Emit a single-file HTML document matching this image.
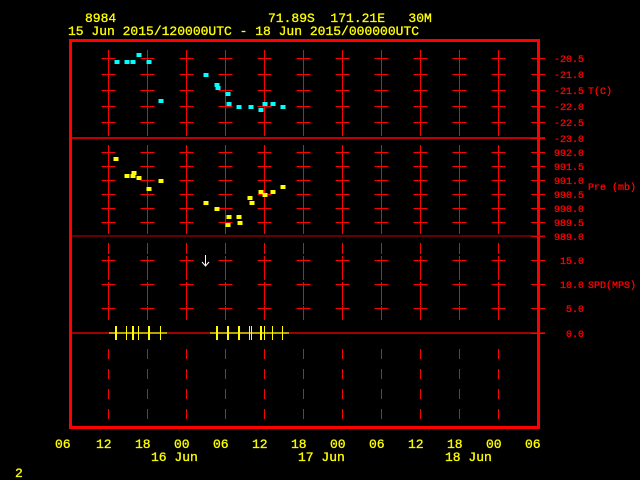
<!DOCTYPE html>
<html><head><meta charset="utf-8"><style>
html,body{margin:0;padding:0;background:#000;width:640px;height:480px;overflow:hidden}
svg{display:block}
text{font-family:"Liberation Mono",monospace;white-space:pre}
</style></head><body>
<svg id="s" width="640" height="480" xmlns="http://www.w3.org/2000/svg" xml:space="preserve">
<rect width="640" height="480" fill="#000"/>
<g fill="#ffff00" stroke="#ffff00" stroke-width="0.3" font-size="13">
<text x="85" y="22">8984</text>
<text x="268" y="22">71.89S  171.21E   30M</text>
<text x="68" y="35">15 Jun 2015/120000UTC - 18 Jun 2015/000000UTC</text>
<text x="55" y="448">06</text><text x="96" y="448">12</text><text x="135" y="448">18</text><text x="174" y="448">00</text><text x="213" y="448">06</text><text x="252" y="448">12</text><text x="291" y="448">18</text><text x="330" y="448">00</text><text x="369" y="448">06</text><text x="408" y="448">12</text><text x="447" y="448">18</text><text x="486" y="448">00</text><text x="525" y="448">06</text>
<text x="151" y="461">16 Jun</text><text x="298" y="461">17 Jun</text><text x="445" y="461">18 Jun</text>
<text x="15" y="477">2</text>
</g>
<g fill="#ff0000" stroke="#ff0000" stroke-width="0.3" font-size="10" text-anchor="end">
<text x="584" y="62">-20.5</text><text x="584" y="78">-21.0</text><text x="584" y="94">-21.5</text><text x="584" y="110">-22.0</text><text x="584" y="126">-22.5</text><text x="584" y="142">-23.0</text>
<text x="584" y="156">992.0</text><text x="584" y="170">991.5</text><text x="584" y="184">991.0</text><text x="584" y="198">990.5</text><text x="584" y="212">990.0</text><text x="584" y="226">989.5</text><text x="584" y="240">989.0</text>
<text x="584" y="264">15.0</text><text x="584" y="288">10.0</text><text x="584" y="312">5.0</text><text x="584" y="337">0.0</text>
</g>
<g fill="#ff0000" stroke="#ff0000" stroke-width="0.3" font-size="10">
<text x="588" y="94">T(C)</text><text x="588" y="190">Pre (mb)</text><text x="588" y="288">SPD(MPS)</text>
</g>
<g id="grid" stroke="#ff0000" stroke-width="1"></g>
<rect x="70.5" y="40.5" width="468" height="387" fill="none" stroke="#ff0000" stroke-width="3"/>
<line x1="72" y1="138" x2="545" y2="138" stroke="#ff0000" stroke-width="1.5"/>
<line x1="72" y1="236" x2="545" y2="236" stroke="#cc0000" stroke-width="1"/>
<line x1="72" y1="333" x2="545" y2="333" stroke="#ff0000" stroke-width="1.3"/>
<g id="pts"></g>
<g stroke="#ffff00" stroke-width="1.2">
<line x1="109" y1="333" x2="167" y2="333"/><line x1="210" y1="333" x2="289" y2="333"/>
</g>
<g id="bars" stroke="#ffff00"></g>
<g stroke="#ffffff" stroke-width="1" fill="none"><line x1="205.5" y1="255" x2="205.5" y2="266"/><polyline points="202,262 205.5,266 209,262"/></g>
</svg>
<script>
var ns="http://www.w3.org/2000/svg";
function L(g,x1,y1,x2,y2,c,w){var l=document.createElementNS(ns,"line");l.setAttribute("x1",x1);l.setAttribute("y1",y1);l.setAttribute("x2",x2);l.setAttribute("y2",y2);if(c)l.setAttribute("stroke",c);if(w)l.setAttribute("stroke-width",w);g.appendChild(l);}
var g=document.getElementById("grid");
var cols=[108.5,147.5,186.5,225.5,264.5,303.5,342.5,381.5,420.5,459.5,498.5];
var ticks=[58,74,90,106,122,152,166,180,194,208,222,260,284,308];
cols.forEach(function(x){
 [[50,130],[145,229],[243,254],[256,280],[282,305],[306,320]].forEach(function(s){L(g,x,s[0],x,s[1]);});
 ticks.forEach(function(y){L(g,x-7,y+.5,x+7,y+.5);});
 L(g,x,130,x,136);L(g,x,228,x,234);
 [349,369,389,409].forEach(function(y){L(g,x,y,x,y+10);});
});
ticks.concat([138,236,333]).forEach(function(y){L(g,531,y+.5,545,y+.5);});
var p=document.getElementById("pts");
function R(x,y,c){var r=document.createElementNS(ns,"rect");r.setAttribute("x",x-2.5);r.setAttribute("y",y-2);r.setAttribute("width",5);r.setAttribute("height",4);r.setAttribute("fill",c);p.appendChild(r);}
[[117,62],[127,62],[133,62],[139,55],[149,62],[161,101],[206,75],[217,85],[218,88],[228,94],[229,104],[239,107],[251,107],[261,110],[265,104],[273,104],[283,107]].forEach(function(a){R(a[0],a[1],"#00ffff");});
[[116,159],[127,176],[134,173],[133,176],[139,178],[161,181],[149,189],[206,203],[217,209],[229,217],[228,225],[239,217],[240,223],[250,198],[252,203],[261,192],[265,195],[273,192],[283,187]].forEach(function(a){R(a[0],a[1],"#ffff00");});
var b=document.getElementById("bars");
[[116,2],[126,1],[133,2],[138,1],[149,2],[160,1],[217,2],[228,2],[239,2],[249,1],[251,1],[261,2],[264,1],[272,1],[282,1]].forEach(function(a){var x=a[1]==1?a[0]+0.5:a[0];L(b,x,326,x,340,null,a[1]);});
</script>
</body></html>
